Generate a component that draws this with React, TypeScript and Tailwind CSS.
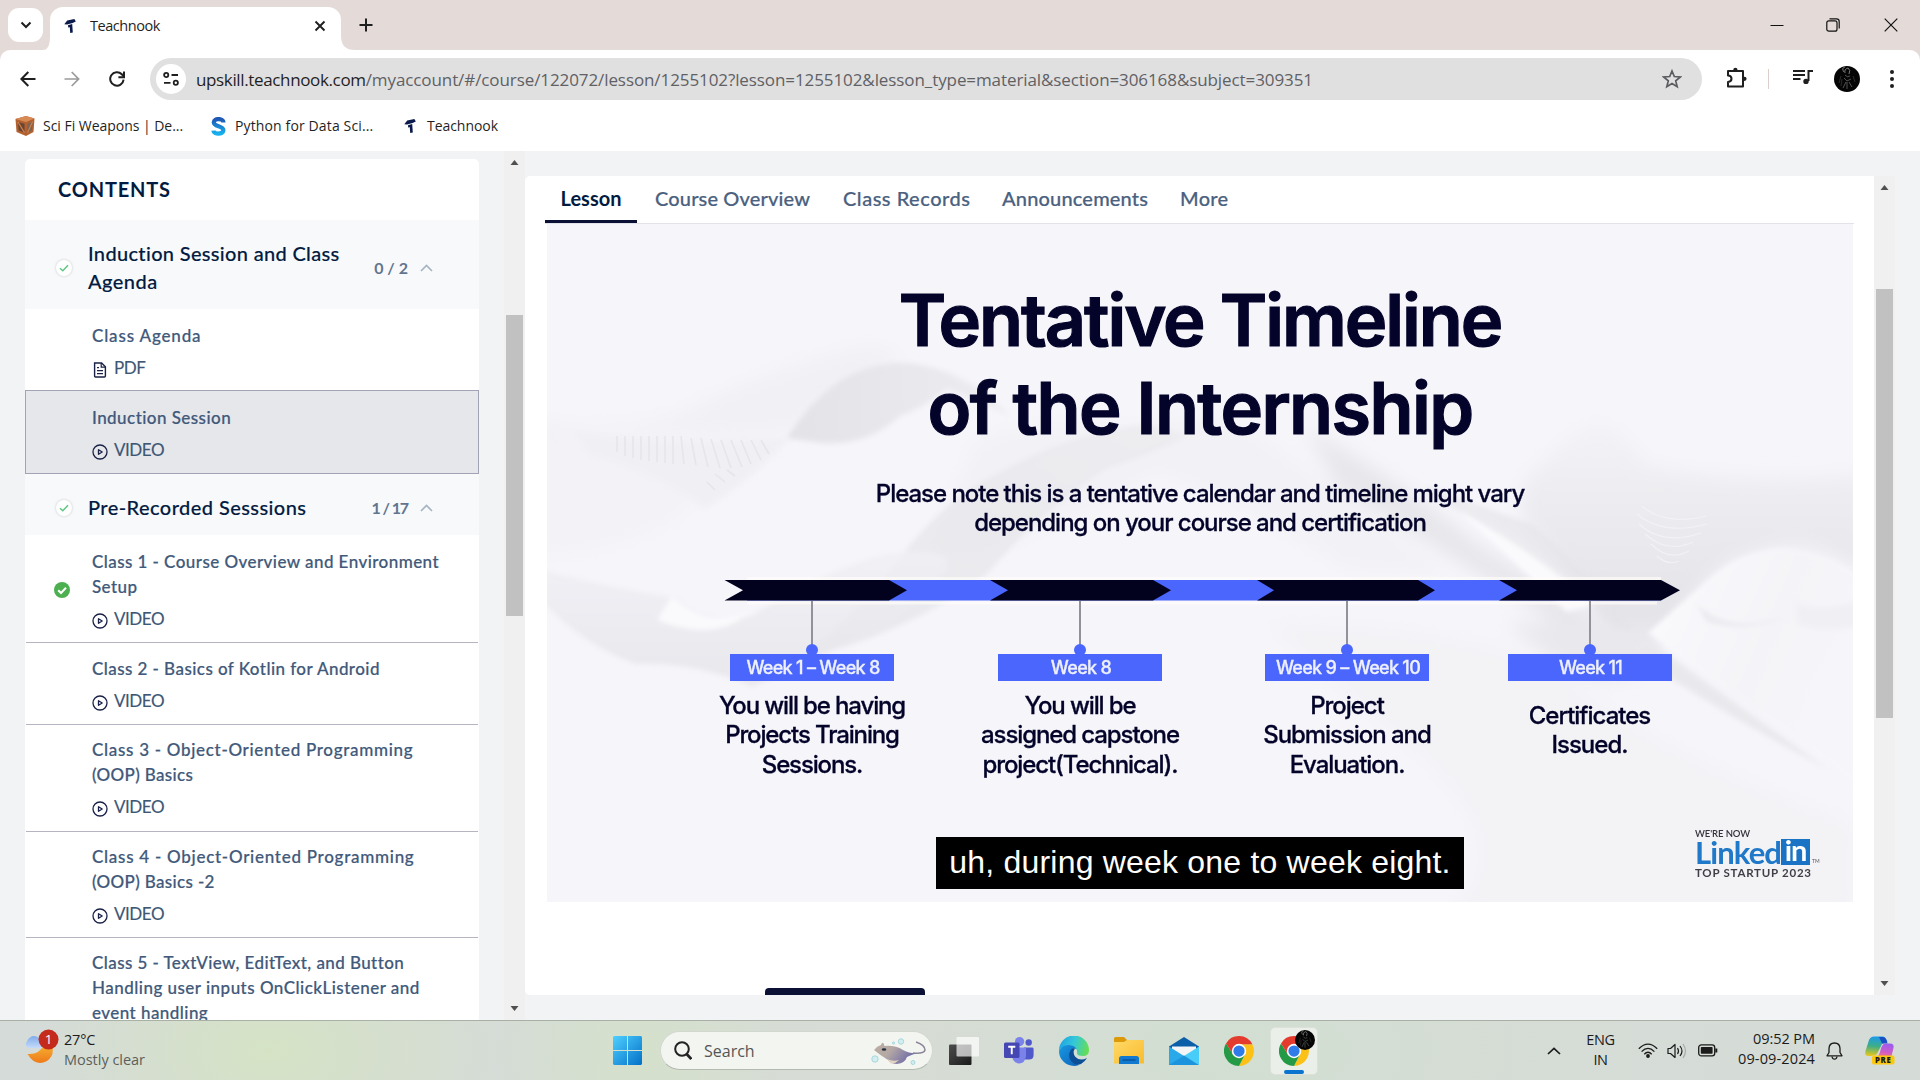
import React from "react";

function NookLogo({ className }: { className: string }) {
  return (
    <svg viewBox="0 0 12 14" className={className} fill="#0b1a4a">
      <path d="M0.3 5.2 L3.2 1.6 L10.4 0 L11.8 2.6 L8.6 4 L3.2 5.4 Z" />
      <path d="M4 6.2 L8.2 5 L8.8 13.6 L6.2 14 L5.8 8.2 L4.2 8.6 Z" />
    </svg>
  );
}

function TabStrip() {
  return (
    <div className="flex h-[50px] items-end bg-[#e4dbd8]">
      <div className="mb-2 ml-2 flex h-[34px] w-[35px] items-center justify-center rounded-[11px] bg-white">
        <svg viewBox="0 0 12 8" className="h-2 w-3" fill="none" stroke="#1f1f1f" strokeWidth="2"><path d="M1.5 1.5 L6 6 L10.5 1.5" /></svg>
      </div>
      <svg viewBox="0 0 9 14" className="h-3.5 w-[7px] shrink-0" preserveAspectRatio="none" fill="#fff"><path d="M9 0 V14 H0 Q9 14 9 0Z" /></svg>
      <div className="flex h-[43px] w-[291px] items-center rounded-t-[13px] bg-white pl-3.5 pr-[15px] pb-1.5">
        <NookLogo className="h-3.5 w-3" />
        <span className="ml-3.5 font-['Open_Sans',sans-serif] text-[14.5px] tracking-[-0.45px] text-[#1f1f1f]">Teachnook</span>
        <svg viewBox="0 0 12 12" className="ml-auto h-3 w-3" fill="none" stroke="#1f1f1f" strokeWidth="1.9"><path d="M1.5 1.5 L10.5 10.5 M10.5 1.5 L1.5 10.5" /></svg>
      </div>
      <svg viewBox="0 0 14 14" className="h-3.5 w-3.5" fill="#fff"><path d="M0 0 V14 H14 Q0 14 0 0Z" /></svg>
      <svg viewBox="0 0 14 14" className="mb-[18px] ml-1 h-3.5 w-3.5" fill="none" stroke="#1f1f1f" strokeWidth="2"><path d="M7 0.5 V13.5 M0.5 7 H13.5" /></svg>
      <div className="mb-[18px] ml-auto mr-[22px] flex items-center">
        <svg viewBox="0 0 14 14" className="h-3.5 w-3.5" stroke="#111" strokeWidth="1"><path d="M0.5 7.5 H13.5" /></svg>
        <svg viewBox="0 0 14 14" className="ml-[42px] h-3.5 w-3.5" fill="none" stroke="#111" strokeWidth="1.2"><rect x="0.8" y="2.8" width="10.2" height="10.4" rx="2" /><path d="M3.5 0.8 H10.5 Q13.2 0.8 13.2 3.5 V10.5" /></svg>
        <svg viewBox="0 0 14 14" className="ml-[44px] h-3.5 w-3.5" fill="none" stroke="#111" strokeWidth="1.2"><path d="M0.7 0.7 L13.3 13.3 M13.3 0.7 L0.7 13.3" /></svg>
      </div>
    </div>
  );
}

function Avatar({ className }: { className: string }) {
  return (
    <svg viewBox="0 0 26 26" className={className}>
      <circle cx="13" cy="13" r="13" fill="#050505" />
      <g fill="none" stroke="#a8a8a8" strokeWidth="0.9" opacity="0.8">
        <path d="M10 6 Q7 2 11 1 M11 7 Q10 3 14 2 Q17 4 15 8" />
        <path d="M11 9 Q13 12 16 10 M10 12 L13 15 L17 13 M12 16 L9 22 M15 16 L18 21 M13 16 L13 23" strokeWidth="0.6" />
        <path d="M7 10 L5 17 M19 10 L21 16 M8 13 L7 20" strokeWidth="0.5" opacity="0.6" />
      </g>
    </svg>
  );
}

function Toolbar() {
  return (
    <div className="bg-[#e4dbd8]">
      <div className="flex h-[58px] items-center rounded-t-[10px] bg-white pl-5">
        <svg viewBox="0 0 16 16" className="h-4 w-4" fill="none" stroke="#1f1f1f" strokeWidth="2"><path d="M15.5 8 H1.6 M8.3 1 L1.4 8 L8.3 15" /></svg>
        <svg viewBox="0 0 16 16" className="ml-7 h-4 w-4" fill="none" stroke="#9a9a9a" strokeWidth="1.7"><path d="M0.5 8 H14.4 M7.7 1 L14.6 8 L7.7 15" /></svg>
        <svg viewBox="0 0 16 16" className="ml-[29px] h-4 w-4" fill="none" stroke="#1f1f1f" strokeWidth="2"><path d="M14.6 8.6 A6.7 6.7 0 1 1 12.8 3.3 L14.4 5" /><path d="M15 0.6 V6.2 H9.4" /></svg>
        <div className="ml-[25px] flex h-[42px] w-[1552px] items-center rounded-full bg-[#e0e0e0] pl-[6px] pr-5">
          <div className="flex h-[30px] w-[30px] items-center justify-center rounded-full bg-white">
            <svg viewBox="0 0 16 14" className="h-3.5 w-4" fill="none" stroke="#1f1f1f" strokeWidth="1.8"><circle cx="3.2" cy="3" r="2.1" /><path d="M8.5 3 H15 M1 10.8 H7.5" /><circle cx="12.8" cy="10.8" r="2.1" /></svg>
          </div>
          <div className="ml-2.5 whitespace-nowrap pt-0.5 font-['Open_Sans',sans-serif] text-[17px] tracking-[-0.09px] text-[#5f6165]">
            <span className="tracking-[-0.36px] text-[#1f1f1f]">upskill.teachnook.com</span>/myaccount/#/course/122072/lesson/1255102?lesson=1255102&amp;lesson_type=material&amp;section=306168&amp;subject=309351
          </div>
          <svg viewBox="0 0 20 20" className="ml-auto h-5 w-5" fill="none" stroke="#5a5c60" strokeWidth="1.7"><path d="M10 2 L12.3 7.5 L18.3 8 L13.7 11.9 L15.2 17.7 L10 14.6 L4.8 17.7 L6.3 11.9 L1.7 8 L7.7 7.5 Z" /></svg>
        </div>
        <svg viewBox="0 0 21 21" className="ml-6 mb-1 h-[21px] w-[21px]" fill="none" stroke="#1f1f1f" strokeWidth="2"><path d="M2 4 H17 V19.5 H2 V15 Q5.5 14.8 5.5 11.8 Q5.5 8.8 2 8.6 Z" strokeLinejoin="round" /><circle cx="9.4" cy="2.8" r="2.1" fill="#1f1f1f" stroke="none" /><circle cx="18.5" cy="11.8" r="2.1" fill="#1f1f1f" stroke="none" /></svg>
        <div className="ml-[21px] h-5 w-px bg-[#dccfcb]" />
        <svg viewBox="0 0 20 16" className="mb-1 ml-6 h-4 w-5" fill="none" stroke="#1f1f1f" strokeWidth="2"><path d="M0 2 H12 M0 6 H12 M0 10 H7.5" /><path d="M15.5 12 V2 H20" /><circle cx="13" cy="12.4" r="2.7" fill="#1f1f1f" stroke="none" /></svg>
        <Avatar className="ml-[21px] h-[26px] w-[26px]" />
        <svg viewBox="0 0 4 18" className="ml-[30px] h-[18px] w-1" fill="#1f1f1f"><circle cx="2" cy="2" r="2" /><circle cx="2" cy="9" r="2" /><circle cx="2" cy="16" r="2" /></svg>
      </div>
    </div>
  );
}

function Bookmarks() {
  return (
    <div className="flex h-[43px] items-center bg-white pb-[7px] pl-[15px] font-['Open_Sans',sans-serif] text-[14px] text-[#1f1f1f]">
      <svg viewBox="0 0 20 20" className="h-5 w-5"><path d="M0.5 3 L11 0 L19.5 2.5 L18.5 16 L11 20 L1.5 16 Z" fill="#b3612f" /><path d="M0.5 3 L11 0 L19.5 2.5 L11 6 Z" fill="#d88a55" /><path d="M3 6 L9.5 7.8 V16.6 L3.6 14.4 Z" fill="#6b4433" /><path d="M12.5 7.8 L17.6 5.6 L17 14.4 L12.5 16.8 Z" fill="#7c6355" /><path d="M3 6 L9.5 16.6 M17.6 5.6 L12.5 16.8" stroke="#c9834f" strokeWidth="1.2" /></svg>
      <span className="mb-0.5 ml-[8px] w-[168px] tracking-[-0.03px]">Sci Fi Weapons | De...</span>
      <svg viewBox="0 0 15 19" className="h-[19px] w-[15px]" fill="none">
        <defs><linearGradient id="sg" x1="0" y1="0" x2="0" y2="1"><stop offset="0" stopColor="#1f57b5" /><stop offset="1" stopColor="#16b1ee" /></linearGradient></defs>
        <path d="M12.5 5.5 C12.5 1 3 0.8 2.8 5.4 C2.8 9.8 12.4 8.6 12.4 13.2 C12.2 18 2.6 17.6 2.4 13.6" stroke="url(#sg)" strokeWidth="4.2" />
      </svg>
      <span className="mb-0.5 ml-[9px] w-[169px] tracking-[0.13px]">Python for Data Sci...</span>
      <NookLogo className="h-3.5 w-3" />
      <span className="mb-0.5 ml-[11px] tracking-[-0.05px]">Teachnook</span>
    </div>
  );
}

function SectionCheck() {
  return (
    <div className="flex h-4 w-4 shrink-0 items-center justify-center rounded-full bg-white shadow-[0_0_3px_rgba(0,0,0,0.2)]">
      <svg viewBox="0 0 10 8" className="h-2 w-2.5" fill="none" stroke="#5fc783" strokeWidth="1.5"><path d="M1 4.2 L3.8 6.8 L9 1.2" /></svg>
    </div>
  );
}

function SectionHead({ children, count, className }: { children: React.ReactNode; count: React.ReactNode; className: string }) {
  return (
    <div className={`flex items-center bg-[#f8f9fb] pl-[31px] pr-[46px] pt-[7px] ${className}`}>
      <SectionCheck />
      <div className="ml-4 grow pb-[3px] text-[20px] font-medium leading-7 text-[#031b40] [-webkit-text-stroke:0.15px_#031b40]">{children}</div>
      {count}
      <svg viewBox="0 0 13 8" className="ml-3 h-2 w-[13px]" fill="none" stroke="#a9b4c2" strokeWidth="1.7"><path d="M1 7 L6.5 1.4 L12 7" /></svg>
    </div>
  );
}

function PlayIcon() {
  return (
    <svg viewBox="0 0 16 16" className="mt-1 h-4 w-4" fill="none" stroke="#1a2147" strokeWidth="1.3"><circle cx="8" cy="8" r="7" /><path d="M6.5 5.7 L10.2 8 L6.5 10.3 Z" strokeLinejoin="round" /></svg>
  );
}

function PdfIcon() {
  return (
    <svg viewBox="0 0 16 16" className="mt-1 h-4 w-4" fill="none" stroke="#1a2147" strokeWidth="1.4"><path d="M2.6 1 H9.6 L13.4 4.8 V14 Q13.4 15 12.4 15 H3.6 Q2.6 15 2.6 14 Z" /><path d="M9.2 1 V5.2 H13.4 M5 5.6 H7 M5 8.6 H11 M5 11.6 H11" strokeWidth="1.2" /></svg>
  );
}

function LessonItem({ lines, kind = "VIDEO", done = false, className }: { lines: React.ReactNode; kind?: string; done?: boolean; className: string }) {
  return (
    <div className={`flex ${className}`}>
      <div className="flex w-[66px] shrink-0 items-center pb-[12px] pl-7">
        {done && (
          <svg viewBox="0 0 16 16" className="h-4 w-4"><circle cx="8" cy="8" r="8" fill="#4caf50" /><path d="M4.2 8.2 L7 11 L12 5.8" fill="none" stroke="#fff" strokeWidth="2" /></svg>
        )}
      </div>
      <div>
        <div className="whitespace-nowrap text-[17px] font-medium leading-[25px] text-[#41597a] [-webkit-text-stroke:0.2px_#41597a]">{lines}</div>
        <div className="mt-[7px] flex h-[25px] items-center gap-[6px] text-[17px] tracking-[-0.45px] text-[#3e5775] [-webkit-text-stroke:0.15px_#3e5775]">
          {kind === "PDF" ? <PdfIcon /> : <PlayIcon />}
          <span>{kind}</span>
        </div>
      </div>
    </div>
  );
}

function Scrollbar({ className, thumb }: { className: string; thumb: string }) {
  return (
    <div className={`flex shrink-0 flex-col items-center bg-[#f0f0f0] ${className}`}>
      <svg viewBox="0 0 8 5" className="mt-[9px] h-[5px] w-[9px]" fill="#505050"><path d="M4 0 L8 5 H0 Z" /></svg>
      <div className={`bg-[#c1c1c1] ${thumb}`} />
      <svg viewBox="0 0 8 5" className="mb-[9px] mt-auto h-[5px] w-[9px]" fill="#505050"><path d="M4 5 L8 0 H0 Z" /></svg>
    </div>
  );
}

function Sidebar() {
  return (
    <aside className="ml-[25px] mt-2 w-[454px] shrink-0 overflow-hidden rounded-t-[5px] bg-white font-['Lato',sans-serif]">
      <div className="h-[61px] pl-[33px] pt-[16px] text-[20px] font-bold leading-7 tracking-[0.8px] text-[#031b40]">CONTENTS</div>
      <SectionHead className="h-[89px]" count={<span className="text-[16px] font-bold text-[#62758f]">0 / 2</span>}>
        <div className="tracking-[0.33px]">Induction Session and Class</div>
        <div className="tracking-[0.45px]">Agenda</div>
      </SectionHead>
      <LessonItem className="h-[81px] px-px pt-[14px]" kind="PDF" lines={<div className="tracking-[0.85px]">Class Agenda</div>} />
      <LessonItem className="h-[84px] border border-[#a2a3b4] bg-[#e6e7ea] pt-[14px]" lines={<div className="tracking-[0.45px]">Induction Session</div>} />
      <SectionHead className="h-[61px]" count={<span className="text-[16px] font-bold tracking-[-1.1px] text-[#62758f]">1 / 17</span>}>
        <div className="tracking-[0.43px]">Pre-Recorded Sesssions</div>
      </SectionHead>
      <LessonItem done className="mx-px h-[108px] border-b border-[#b4b5c0] pt-[14px]" lines={<><div className="tracking-[0.44px]">Class 1 - Course Overview and Environment</div><div className="tracking-[0.4px]">Setup</div></>} />
      <LessonItem className="mx-px h-[82px] border-b border-[#b4b5c0] pt-[13px]" lines={<div className="tracking-[0.44px]">Class 2 - Basics of Kotlin for Android</div>} />
      <LessonItem className="mx-px h-[107px] border-b border-[#b4b5c0] pt-[12px]" lines={<><div className="tracking-[0.7px]">Class 3 - Object-Oriented Programming</div><div className="tracking-[0.35px]">(OOP) Basics</div></>} />
      <LessonItem className="mx-px h-[106px] border-b border-[#b4b5c0] pt-[12px]" lines={<><div className="tracking-[0.73px]">Class 4 - Object-Oriented Programming</div><div className="tracking-[0.35px]">(OOP) Basics -2</div></>} />
      <LessonItem className="mx-px h-[132px] pt-[12px]" lines={<><div className="tracking-[0.42px]">Class 5 - TextView, EditText, and Button</div><div className="tracking-[0.48px]">Handling user inputs OnClickListener and</div><div className="tracking-[0.45px]">event handling</div></>} />
    </aside>
  );
}

/* Slide artwork: soft mesh waves and the chevron timeline. Origin is the slide's top-left corner. */
function SlideArt() {
  return (
    <svg viewBox="0 0 1306 678" className="absolute inset-0 h-[678px] w-full">
      <defs>
        <filter id="soft" x="-20%" y="-20%" width="140%" height="140%"><feGaussianBlur stdDeviation="9" /></filter>
        <filter id="crisp" x="-10%" y="-10%" width="120%" height="120%"><feGaussianBlur stdDeviation="2.5" /></filter>
        <linearGradient id="w1" x1="0" y1="0" x2="1" y2="0"><stop offset="0" stopColor="#e2e2e7" /><stop offset="1" stopColor="#ededf1" /></linearGradient>
        <linearGradient id="w2" x1="0" y1="0" x2="0" y2="1"><stop offset="0" stopColor="#f0f0f4" /><stop offset="1" stopColor="#e5e5ea" /></linearGradient>
        <linearGradient id="w3" x1="0" y1="0" x2="0" y2="1"><stop offset="0" stopColor="#f3f3f7" /><stop offset="1" stopColor="#e0e0e5" /></linearGradient>
        <linearGradient id="w4" x1="1" y1="0" x2="0" y2="1"><stop offset="0" stopColor="#eaeaee" /><stop offset="0.5" stopColor="#e5e5e9" /><stop offset="1" stopColor="#e2e2e7" /></linearGradient>
        <linearGradient id="w5" x1="0" y1="0" x2="1" y2="0.5"><stop offset="0" stopColor="#fbfbfd" /><stop offset="0.6" stopColor="#f4f4f8" /><stop offset="1" stopColor="#f6f6fa" /></linearGradient>
      </defs>
      <rect width="1306" height="678" fill="#f6f5fa" />
      <g filter="url(#soft)">
        <path d="M-10 196 Q60 212 130 190 Q210 150 300 126 Q340 116 355 138 Q290 160 250 206 Q200 212 120 210 L-10 214 Z" fill="#f1f1f5" />
        <path d="M-10 214 Q120 224 240 216 Q180 256 120 300 Q60 330 -10 330 Z" fill="#f3f3f7" />
        <path d="M430 215 Q520 190 580 205 Q660 180 710 210 Q800 270 900 350 L800 345 Q700 280 610 250 Q520 300 430 330 L380 330 Z" fill="#f2f2f6" />
        <path d="M759 204 Q860 260 930 320 Q1010 370 1080 410 L1050 425 Q900 330 790 262 Z" fill="#e7e7eb" />
        <path d="M974 264 Q1000 226 1045 200 Q1072 196 1098 240 Q1190 262 1320 250 L1320 350 Q1270 318 1234 324 Q1190 330 1163 354 L1101 425 L1060 395 Q1010 335 974 292 Z" fill="url(#w3)" />
        <path d="M720 400 Q900 400 1000 440 Q1090 520 1306 600 L1306 690 L900 690 Q980 620 860 520Z" fill="#f3f3f6" />
        <path d="M960 400 Q1040 395 1120 400 L1104 440 Q1060 470 1010 440 Z" fill="#e9e9ed" />
      </g>
      <g filter="url(#crisp)">
        <path d="M240 214 Q290 134 363 139 Q420 146 463 192 Q430 176 400 165 Q380 182 353 192 Q320 222 276 219 Z" fill="url(#w1)" />
        <path d="M30 208 Q140 222 241 214 Q210 252 158 285 Q120 254 40 230Z" fill="#f0f0f4" />
        <path d="M640 212 Q600 232 560 244 Q490 290 440 350 Q360 410 250 436 Q300 400 345 345 Q390 280 450 250 Q520 210 600 200 Z" fill="url(#w4)" opacity="0.65" />
        <path d="M-6 346 Q70 366 130 374 Q150 400 205 392 Q270 350 340 330 Q410 322 400 345 Q350 400 280 428 Q240 450 205 462 Q150 438 90 440 Q40 424 -6 376 Z" fill="url(#w2)" opacity="0.85" />
        <path d="M125 372 Q160 408 205 386 Q170 420 110 396Z" fill="#fafafd" />
        <path d="M915 276 Q960 300 1050 380 L1020 388 Q960 330 915 290 Z" fill="#fafafd" />
        <path d="M880 262 Q940 285 985 300 Q1050 355 1085 408 L1058 396 Q1000 330 880 270 Z" fill="#e3e3e8" opacity="0.6" />
        <path d="M1101 409 L1163 354 Q1195 326 1234 324 Q1275 326 1310 350 L1310 560 Q1200 480 1101 409 Z" fill="url(#w5)" />
        <path d="M1148 378 Q1180 412 1240 392 Q1200 410 1160 398Z" fill="#ebebef" />
        <path d="M1250 380 Q1285 388 1310 376 L1310 402 Q1280 410 1250 400Z" fill="#f0f0f4" />
        <path d="M1095 412 Q1190 480 1280 545 Q1180 492 1085 430 Z" fill="#e9e9ed" />
      </g>
      <g fill="none" stroke="#dcdce2" strokeWidth="1.6" opacity="0.55">
        <path d="M70 212 V228 M78 212 V232 M86 212 V234 M94 212 V236 M102 212 V237 M110 212 V238 M118 212 V239 M126 212 V240 M134 212 L137 240 M144 214 L149 241 M154 214 L161 243 M164 215 L173 244 M174 216 L184 244 M184 216 L195 243 M194 216 L204 240 M204 216 L214 236 M214 216 L222 230 M180 246 L188 252 M168 250 L178 258 M160 258 L168 266" />
      </g>
      <g fill="none" stroke="#f4f4f8" strokeWidth="1.2" opacity="0.8">
        <path d="M1095 282 Q1118 302 1160 292 M1090 290 Q1116 312 1160 300 M1092 300 Q1116 322 1154 309 M1098 310 Q1120 330 1146 318 M1104 320 Q1122 338 1142 327 M1110 332 Q1120 342 1132 337" />
      </g>
      <path d="M200 354.500 H1114 M200 379 H1110" stroke="#fffdfa" strokeWidth="3" opacity="0.7" />
      <rect x="200" y="356" width="914" height="20.500" fill="#4a66fc" />
      <g fill="#02021f">
        <path d="M177.500 356 H342 L360 366.300 L342 376.500 H177.500 L196 366.300 Z" />
        <path d="M443 356 H606 L624 366.300 L606 376.500 H443 L461 366.300 Z" />
        <path d="M710 356 H871 L888 366.300 L871 376.500 H710 L727 366.300 Z" />
        <path d="M952 356 H1114 L1133 366.300 L1114 376.500 H952 L970 366.300 Z" />
      </g>
      <path d="M265 377 V427 M533 377 V427 M800 377 V427 M1043 377 V427" stroke="#92929c" strokeWidth="2" />
      <g fill="#4a66fc"><circle cx="265" cy="426" r="6" /><circle cx="533" cy="426" r="6" /><circle cx="800" cy="426" r="6" /><circle cx="1043" cy="426" r="6" /></g>
    </svg>
  );
}

function WeekColumn({ label, children, className }: { label: React.ReactNode; children: React.ReactNode; className: string }) {
  return (
    <div className={`flex shrink-0 flex-col items-center ${className}`}>
      <div className="flex h-[27px] w-[164px] items-center justify-center whitespace-nowrap bg-[#4a66fc] pt-px text-[18px] font-medium leading-[26px] tracking-[-0.7px] text-[#eef0ff] [-webkit-text-stroke:0.3px_#eef0ff]">{label}</div>
      {children}
    </div>
  );
}

function Slide() {
  return (
    <div className="relative ml-[22px] h-[678px] w-[1306px] shrink-0 overflow-hidden font-['Inter',sans-serif] text-[#04042a]">
      <SlideArt />
      <div className="relative flex h-full flex-col">
        <h1 className="mt-[52px] text-center text-[72px] font-semibold leading-[88px] [-webkit-text-stroke:1.2px_#04042a]">
          <div className="tracking-[-2.05px]">Tentative Timeline</div>
          <div className="tracking-[-1.6px]">of the Internship</div>
        </h1>
        <p className="mt-[27px] text-center text-[24px] font-medium leading-[29px] tracking-[-1.03px] [-webkit-text-stroke:0.3px_#04042a]">
          Please note this is a tentative calendar and timeline might vary<br />depending on your course and certification
        </p>
        <div className="mt-[117px] flex pl-[131px] [&_p]:[-webkit-text-stroke:0.3px_#04042a]">
          <WeekColumn className="w-[268px]" label={<span className="pl-0.5">Week 1 – Week 8</span>}>
            <p className="mt-[10px] text-center text-[24px] font-medium leading-[29.4px] tracking-[-1.13px]">You will be having<br />Projects Training<br />Sessions.</p>
          </WeekColumn>
          <WeekColumn className="w-[268px]" label={<span className="pl-0.5">Week 8</span>}>
            <p className="mt-[10px] text-center text-[24px] font-medium leading-[29.4px] tracking-[-1.1px]">You will be<br />assigned capstone<br />project(Technical).</p>
          </WeekColumn>
          <WeekColumn className="w-[266px]" label={<span className="pl-0.5">Week 9 – Week 10</span>}>
            <p className="mt-[10px] text-center text-[24px] font-medium leading-[29.4px] tracking-[-1.05px]">Project<br />Submission and<br />Evaluation.</p>
          </WeekColumn>
          <WeekColumn className="w-[219px]" label={<span className="pl-0.5">Week 11</span>}>
            <p className="mt-[20px] text-center text-[24px] font-medium leading-[29.4px] tracking-[-1px]">Certificates<br />Issued.</p>
          </WeekColumn>
        </div>
      </div>
      <div className="absolute left-[389px] top-[613px] flex h-[52px] w-[528px] items-center justify-center whitespace-nowrap bg-black pb-0.5 font-['Liberation_Sans',sans-serif] text-[32px] tracking-[0.2px] text-white">uh, during week one to week eight.</div>
      <div className="absolute left-[1148px] top-[605px] w-[140px] font-['Lato',sans-serif]">
        <div className="text-[9.500px] font-semibold leading-[10px] tracking-[-0.100px] text-[#33333b]">WE'RE NOW</div>
        <div className="flex items-center">
          <span className="w-[85px] text-[31px] font-bold leading-[26px] tracking-[-0.900px] text-[#1f78c8]">Linked</span>
          <span className="ml-px flex h-[26px] w-[29px] items-center justify-center bg-[#1a73c4] pb-1 text-[29px] font-bold leading-[26px] tracking-[-1px] text-white">in</span>
          <span className="ml-0.5 self-end text-[5px] text-[#55555d]">TM</span>
        </div>
        <div className="mt-[2px] whitespace-nowrap text-[11.500px] font-bold leading-[12px] tracking-[0.750px] text-[#3f3f47]">TOP STARTUP 2023</div>
      </div>
    </div>
  );
}

function MainCard() {
  return (
    <main className="mt-[25px] flex h-[819px] w-[1370px] shrink-0 overflow-hidden rounded-l-[5px] bg-white">
      <div className="flex w-[1349px] flex-col overflow-hidden">
        <nav className="ml-5 flex h-[48px] w-[1309px] shrink-0 border-b border-[#e2e3e8] font-['Lato',sans-serif] text-[20px] font-medium text-[#4a6180] [&>div+div]:[-webkit-text-stroke:0.2px_#4a6180]">
          <div className="flex w-[92px] items-center justify-center border-b-[3px] border-[#0b1134] font-bold text-[#031b40]">Lesson</div>
          <div className="ml-[18px] w-[188px] pt-[7px] tracking-[0.155px]">Course Overview</div>
          <div className="w-[159px] pt-[7px] tracking-[0.52px]">Class Records</div>
          <div className="w-[178px] pt-[7px] tracking-[0.18px]">Announcements</div>
          <div className="pt-[7px] tracking-[0.3px]">More</div>
        </nav>
        <Slide />
        <div className="ml-60 mt-[86px] h-12 w-40 shrink-0 rounded-[4px] bg-[#0b1134]" />
      </div>
      <Scrollbar className="w-[21px]" thumb="mt-[99px] h-[429px] w-[17px]" />
    </main>
  );
}

function Chrome({ className }: { className: string }) {
  return (
    <svg viewBox="0 0 48 48" className={className}>
      <path d="M24 13 H45.300 A24 24 0 0 1 24 48 L33.500 29.500 Z" fill="#fbc116" />
      <path d="M3.200 12 L14.500 29.500 L24 35 L33.500 29.500 L24 48 A24 24 0 0 1 3.200 12Z" fill="#249a47" />
      <path d="M3.200 12 A24 24 0 0 1 45.300 13 H24 L14.500 29.500 Z" fill="#e33b2e" />
      <circle cx="24" cy="24" r="11.500" fill="#fff" /><circle cx="24" cy="24" r="9" fill="#2f7bea" />
    </svg>
  );
}

function TaskbarIcons() {
  return (
    <div className="flex items-center">
      <svg viewBox="0 0 29 29" className="h-[29px] w-[29px]">
        <defs><linearGradient id="win" x1="0" y1="0" x2="1" y2="1"><stop offset="0" stopColor="#4fd0ff" /><stop offset="1" stopColor="#0370c8" /></linearGradient></defs>
        <path d="M1 0 H14 V14 H0 V1Z M15 0 H28 L29 1 V14 H15Z M0 15 H14 V29 H1 L0 28Z M15 15 H29 V28 L28 29 H15Z" fill="url(#win)" />
      </svg>
      <div className="ml-[18px] flex h-[39px] w-[273px] items-center rounded-full border border-[#d3d8cf] border-b-[#b4bab0] bg-[#f3f5f1] pl-[13px] pr-[5px]">
        <svg viewBox="0 0 18 19" className="h-[19px] w-[18px]" fill="none" stroke="#222" strokeWidth="2"><circle cx="8" cy="8" r="6.800" /><path d="M12.600 13 L17.300 18" strokeWidth="2.600" /></svg>
        <span className="ml-3 font-['Open_Sans',sans-serif] text-[16px] text-[#555]">Search</span>
        <svg viewBox="0 0 56 28" className="ml-auto h-7 w-14">
          <defs><linearGradient id="ray" x1="0" y1="0" x2="1" y2="0.400"><stop offset="0" stopColor="#b9ada3" /><stop offset="0.450" stopColor="#b5a9a5" /><stop offset="1" stopColor="#6f6ca6" /></linearGradient></defs>
          <path d="M45 5 Q54 8 54 13 Q53 17 42 16" fill="none" stroke="#8c8698" strokeWidth="1.500" />
          <path d="M3 13 Q6 9 10 8 Q12 3 13.500 9 Q24 8 32 13 Q40 17 46 16 Q40 18 36 20 Q34 26 26 27 Q20 27 17 23 Q9 18 3 13Z" fill="url(#ray)" />
          <path d="M16 22 Q22 25 28 23 Q24 27 20 26.500 Z" fill="#e3d3c4" />
          <ellipse cx="13" cy="12.500" rx="2.300" ry="1.300" fill="#26303e" />
          <g fill="#d4eef0" stroke="#9ed5da" strokeWidth="0.900"><circle cx="30" cy="4.500" r="2.700" /><circle cx="4" cy="22" r="3.200" /><circle cx="42" cy="25.500" r="2" /><circle cx="22.500" cy="6" r="1.100" /></g>
        </svg>
      </div>
      <svg viewBox="0 0 30 28" className="ml-4 h-7 w-[30px]">
        <defs><linearGradient id="tv" x1="0" y1="0" x2="1" y2="1"><stop offset="0" stopColor="#4d4d4d" /><stop offset="1" stopColor="#1a1a1a" /></linearGradient></defs>
        <rect x="0" y="7.500" width="22.500" height="20.500" rx="1" fill="url(#tv)" /><rect x="7.500" y="0" width="22.500" height="19.500" rx="1" fill="#fff" opacity="0.68" />
      </svg>
      <svg viewBox="0 0 30 27" className="ml-[25px] h-[27px] w-[30px]">
        <circle cx="24.700" cy="5.500" r="3.200" fill="#5059c9" /><path d="M20 10.500 H28.500 Q29.600 10.500 29.600 12 V18 Q29.600 22.500 25 22.500 H20Z" fill="#5059c9" />
        <circle cx="15.600" cy="4.600" r="4.600" fill="#7b83eb" /><path d="M8 10.500 H22 V19 Q21 26.500 15 26.500 Q9 26 8 19Z" fill="#7b83eb" />
        <rect x="0" y="5.500" width="15.500" height="15.500" rx="1.500" fill="#4548b3" /><path d="M4.200 9.800 H11.300 M7.750 9.800 V17.300" stroke="#fff" strokeWidth="1.900" />
      </svg>
      <svg viewBox="0 0 30 30" className="ml-[25px] h-[30px] w-[30px]">
        <defs>
          <linearGradient id="eg1" x1="0" y1="0.300" x2="1" y2="0.500"><stop offset="0" stopColor="#1fa2e6" /><stop offset="0.500" stopColor="#34c8d8" /><stop offset="1" stopColor="#66dd55" /></linearGradient>
          <linearGradient id="eg2" x1="0" y1="0" x2="1" y2="1"><stop offset="0" stopColor="#1899e2" /><stop offset="1" stopColor="#0e62b8" /></linearGradient>
        </defs>
        <path d="M0 15 A15 15 0 0 1 30 14 Q30 20 24 20 Q18.500 20 18 17.500 Q19 11 11 9.500 Q3 9 0 15Z" fill="url(#eg1)" />
        <path d="M0 15 Q3 8.500 10 9 Q16 9.600 17.500 13 Q12 11 11 18 Q11 25 20 29 Q17 30 15 30 A15 15 0 0 1 0 15Z" fill="url(#eg2)" />
        <path d="M12 13.500 Q8 20 12.500 25.500 Q17 30.500 22 28 Q26 25.500 28 22 Q21 25.500 16.500 21 Q13 17 16 12.600 Q13.500 11.600 12 13.500Z" fill="#0d4f96" />
      </svg>
      <svg viewBox="0 0 30 27" className="ml-[25px] h-[27px] w-[30px]">
        <defs><linearGradient id="fo" x1="0" y1="0" x2="1" y2="1"><stop offset="0" stopColor="#ffd968" /><stop offset="1" stopColor="#f9bb2c" /></linearGradient></defs>
        <path d="M0 1.500 Q0 0 1.500 0 H10 L13.500 3.500 V7 H0Z" fill="#dc9a0b" /><path d="M0 5 H10 L13 3 H30 V26.500 H0Z" fill="url(#fo)" />
        <path d="M5 27 V21.500 Q5 19 7.500 19 H22.500 Q25 19 25 21.500 V27Z" fill="#1179cf" /><path d="M8.500 23 H21.500" stroke="#0a4a90" strokeWidth="1.200" />
      </svg>
      <svg viewBox="0 0 30 28" className="ml-[25px] h-7 w-[30px]">
        <path d="M0 9.500 L15 0 L30 9.500 V14 H0Z" fill="#0b5ea8" /><path d="M3 9.500 H27 V16 L15 20 L3 16Z" fill="#f2f4f6" />
        <path d="M0 9.500 L15 19 V28 H0Z" fill="#2aa9ea" /><path d="M30 9.500 L15 19 L30 28Z" fill="#48cdf8" /><path d="M0 28 H30 L15 18.500 Z" fill="#1c94dd" />
      </svg>
      <Chrome className="ml-[25px] h-[30px] w-[30px]" />
      <div className="relative ml-4 flex h-12 w-12 items-center justify-center rounded-[5px] border border-[#dde1da] bg-[#ebefe9]">
        <Chrome className="h-[30px] w-[30px]" />
        <Avatar className="absolute right-[2px] top-[2px] h-5 w-5" />
        <div className="absolute bottom-0 left-[13px] h-1 w-5 rounded-full bg-[#0a74cf]" />
      </div>
    </div>
  );
}

function Taskbar() {
  return (
    <footer className="flex h-[60px] items-center border-t border-[#a9b0a6] bg-linear-to-r from-[#d5dbd8] via-[#d7dcd5] to-[#d5dcd7] font-['Open_Sans',sans-serif] text-[14.500px]">
      <div className="flex h-full w-full items-center bg-[radial-gradient(ellipse_230px_140px_at_270px_30px,#d5e3c5,transparent),radial-gradient(ellipse_150px_140px_at_640px_30px,#d4e1cb,transparent),radial-gradient(ellipse_330px_140px_at_1230px_30px,#d2dfd2,transparent)]">
        <div className="flex w-[588px] items-center pl-[25px]">
          <svg viewBox="0 0 34 36" className="mb-[7px] h-9 w-[34px]">
            <defs>
              <linearGradient id="moon" x1="0" y1="0" x2="0" y2="1"><stop offset="0" stopColor="#f6b433" /><stop offset="1" stopColor="#ee7a1b" /></linearGradient>
              <linearGradient id="cl" x1="0" y1="0" x2="0" y2="1"><stop offset="0" stopColor="#7fabec" /><stop offset="1" stopColor="#c5dbfa" /></linearGradient>
            </defs>
            <path d="M2.500 25 Q14 26 20 15 L27 17 Q30 26 22 32 Q10 38 2.500 25Z" fill="url(#moon)" />
            <path d="M3 19 Q-1 16 2 12.500 Q4 7 9.500 7 Q15 8 16 13 V19Z" fill="url(#cl)" />
            <circle cx="23.500" cy="10.500" r="10" fill="#c42b1c" />
            <text x="23.700" y="15.300" textAnchor="middle" fill="#fff" fontSize="13.500" fontFamily="Open Sans, sans-serif">1</text>
          </svg>
          <div className="mb-[2px] ml-[5px] leading-5">
            <div className="tracking-[-0.2px] text-[#1b1b1b]">27°C</div>
            <div className="tracking-[-0.02px] text-[#5b5f5b]">Mostly clear</div>
          </div>
        </div>
        <div className="pl-[25px]"><TaskbarIcons /></div>
        <div className="ml-auto flex items-center pr-[25px] text-[#1b1b1b]">
          <svg viewBox="0 0 14 8" className="h-2 w-3.5" fill="none" stroke="#1b1b1b" strokeWidth="1.700"><path d="M1 7 L7 1.300 L13 7" /></svg>
          <div className="mb-px ml-[25px] w-[29px] text-center leading-5 tracking-[-0.4px]">ENG<br />IN</div>
          <svg viewBox="0 0 20 15" className="ml-[23px] h-[15px] w-5" fill="none" stroke="#1b1b1b" strokeWidth="1.300"><path d="M0.800 5.800 Q10 -3.500 19.200 5.800 M3.600 8.600 Q10 2 16.400 8.600 M6.300 11.200 Q10 7.300 13.700 11.200" /><circle cx="10" cy="13" r="1.900" fill="#1b1b1b" stroke="none" /></svg>
          <svg viewBox="0 0 20 16" className="ml-[9px] h-4 w-5" fill="none" stroke="#1b1b1b" strokeWidth="1.200"><path d="M1 5.500 H3.500 L8 1.500 V14.500 L3.500 10.500 H1Z" strokeLinejoin="round" /><path d="M10.500 5 Q12.500 8 10.500 11 M13 3 Q17 8 13 13" /><path d="M16 1 Q21 8 16 15" stroke="#a6aca6" /></svg>
          <svg viewBox="0 0 20 13" className="ml-[11px] h-[13px] w-5" fill="none" stroke="#1b1b1b" strokeWidth="1.300"><rect x="0.700" y="0.900" width="16" height="11" rx="2.600" /><rect x="2.800" y="3" width="11.800" height="6.800" rx="0.800" fill="#1b1b1b" stroke="none" /><path d="M18.300 4.500 V8.500" strokeWidth="2" /></svg>
          <div className="mb-[3px] ml-[19px] w-[78px] text-right leading-5"><div className="tracking-[-0.07px]">09:52 PM</div><div className="tracking-[0.13px]">09-09-2024</div></div>
          <svg viewBox="0 0 17 18" className="ml-[11px] h-[18px] w-[17px]" fill="none" stroke="#1b1b1b" strokeWidth="1.300"><path d="M1 13.800 L3 10.500 V6.500 Q3.200 1 8.500 1 Q13.800 1 14 6.500 V10.500 L16 13.800 Z" strokeLinejoin="round" /><path d="M6 14.500 Q6.500 17.200 8.500 17.200 Q10.500 17.200 11 14.500" /></svg>
          <svg viewBox="0 0 30 29" className="ml-[22px] h-[29px] w-[30px]">
            <defs>
              <linearGradient id="co1" x1="0.400" y1="0" x2="0.300" y2="1"><stop offset="0" stopColor="#1a9be8" /><stop offset="0.500" stopColor="#3fae86" /><stop offset="1" stopColor="#e9c81c" /></linearGradient>
              <linearGradient id="co2" x1="0.600" y1="0" x2="0.400" y2="1"><stop offset="0" stopColor="#9a5cf0" /><stop offset="0.600" stopColor="#d05cc8" /><stop offset="1" stopColor="#f77a6a" /></linearGradient>
            </defs>
            <path d="M9 0.500 H18 Q21 1 22 6 L17 8 Q14 14 12 18 Q10 20 6 20 H3 Q-0.500 20 0.500 15 L4 4 Q5.500 0.500 9 0.500Z" fill="url(#co1)" />
            <path d="M14 1 H18 Q21.500 1 22.500 7.500 H17Z" fill="#1d4fc4" />
            <path d="M20 7.500 H25 Q29.500 7.500 28.500 12 L26 22 H11 Q14 20 15 16 Q16.500 8 20 7.500Z" fill="url(#co2)" />
            <rect x="7" y="19.500" width="22.500" height="9" rx="2" fill="#fcc80f" />
            <text x="18.200" y="27" textAnchor="middle" fontSize="7.800" fontWeight="800" letterSpacing="0.600" fontFamily="Open Sans, sans-serif" fill="#1b1b1b">PRE</text>
          </svg>
        </div>
      </div>
    </footer>
  );
}

export default function App() {
  return (
    <div className="flex h-[1080px] w-[1920px] flex-col overflow-hidden bg-[#f1f3f5]">
      <TabStrip />
      <Toolbar />
      <Bookmarks />
      <div className="flex h-[869px] shrink-0 overflow-hidden">
        <Sidebar />
        <Scrollbar className="ml-[25px] w-[21px]" thumb="mt-[150px] h-[301px] w-[17px]" />
        <MainCard />
      </div>
      <Taskbar />
    </div>
  );
}
